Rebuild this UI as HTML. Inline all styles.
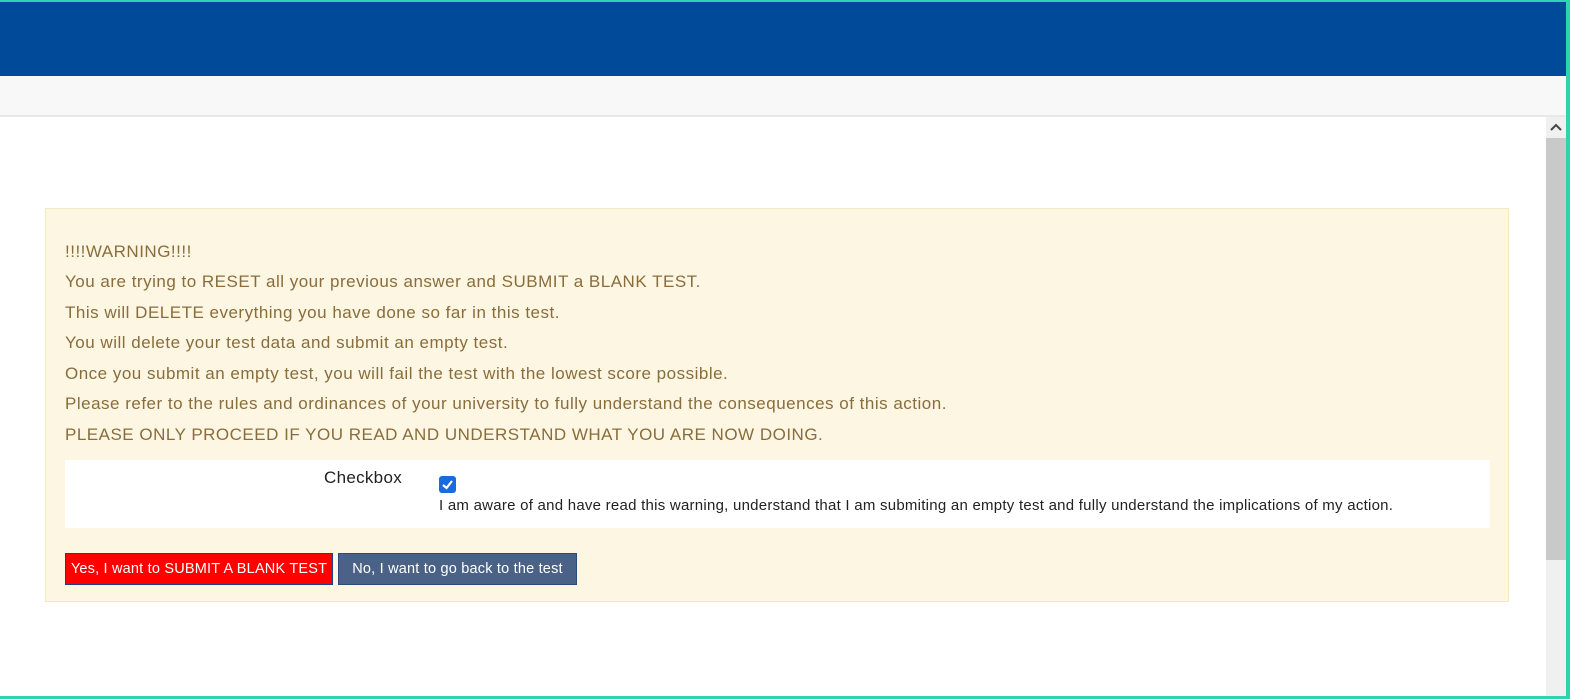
<!DOCTYPE html><html><head><style>
body{margin:0;width:1570px;height:699px;overflow:hidden;background:#2ed3b0;font-family:"Liberation Sans",sans-serif;position:relative}
#f{position:absolute;left:0;top:2px;width:1566px;height:694px;background:#fff;overflow:hidden}
#hd{position:absolute;left:0;top:0;width:1566px;height:74px;background:#004a99}
#nv{position:absolute;left:0;top:74px;width:1566px;height:39px;background:#f8f8f8;border-bottom:2px solid #e8e8e8}
#sb{position:absolute;left:1546px;top:115px;width:20px;height:580px;background:#f0f0f0}
#th{position:absolute;left:1546px;top:136px;width:20px;height:422px;background:#c9c9c9}
#w{position:absolute;left:45px;top:206px;width:1462px;height:392px;background:#fcf6e3;border:1px solid #f3e8c6;color:#8a6d3b;font-size:17px;letter-spacing:0.5px}
.l{position:absolute;left:19px}
#p{position:absolute;left:19px;top:251px;width:1425px;height:68px;background:#fff;color:#222;letter-spacing:0}
.b{position:absolute;top:344px;height:30px;line-height:30px;color:#fff;font-size:14.5px;text-align:center;letter-spacing:0.2px}
</style></head><body><div id="f">
<div id="hd"></div><div id="nv"></div>
<div id="sb"></div><div id="th"></div>
<svg style="position:absolute;left:1549px;top:119px" width="14" height="12"><path d="M2 9 L7 4 L12 9" stroke="#444" stroke-width="2" fill="none"/></svg>
<div id="w">
<div class="l" style="top:33px">!!!!WARNING!!!!</div>
<div class="l" style="top:63px">You are trying to RESET all your previous answer and SUBMIT a BLANK TEST.</div>
<div class="l" style="top:94px">This will DELETE everything you have done so far in this test.</div>
<div class="l" style="top:124px">You will delete your test data and submit an empty test.</div>
<div class="l" style="top:155px">Once you submit an empty test, you will fail the test with the lowest score possible.</div>
<div class="l" style="top:185px">Please refer to the rules and ordinances of your university to fully understand the consequences of this action.</div>
<div class="l" style="top:216px">PLEASE ONLY PROCEED IF YOU READ AND UNDERSTAND WHAT YOU ARE NOW DOING.</div>
<div id="p">
<div style="position:absolute;left:259px;top:8px;font-size:17px;letter-spacing:0.3px">Checkbox</div>
<div style="position:absolute;left:374px;top:16px;width:17px;height:17px;background:#1a6ae0;border-radius:3px"><svg width="17" height="17"><path d="M4 9 L7.5 12 L13 5" stroke="#fff" stroke-width="2.2" fill="none"/></svg></div>
<div style="position:absolute;left:374px;top:37px;font-size:15px;letter-spacing:0.25px">I am aware of and have read this warning, understand that I am submiting an empty test and fully understand the implications of my action.</div>
</div>
<div class="b" style="left:19px;width:266px;background:#f00;border:1px solid #1c3c8c">Yes, I want to SUBMIT A BLANK TEST</div>
<div class="b" style="left:292px;width:237px;background:#4a6285;border:1px solid #2a4a7a">No, I want to go back to the test</div>
</div>
</div></body></html>
